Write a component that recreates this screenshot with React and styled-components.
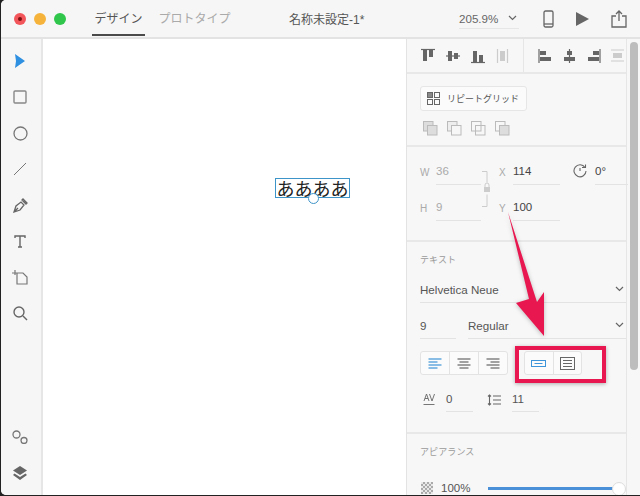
import React from "react";
import styled, { createGlobalStyle } from "styled-components";

const GlobalStyle = createGlobalStyle`
  html, body { margin: 0; padding: 0; background: #222; }
  * { box-sizing: border-box; }
  #root { font-family: "Liberation Sans", "Noto Sans CJK JP", sans-serif; }
`;

const Window = styled.div`
  position: relative;
  width: 639px;
  height: 495px;
  margin-left: 1px;
  background: #f7f7f7;
  display: flex;
  flex-direction: column;
  overflow: hidden;
  border-radius: 5px 0 0 5px;
`;

const TitleBar = styled.div`
  height: 39px;
  flex: none;
  display: flex;
  align-items: center;
  background: #f6f6f6;
  border-bottom: 2px solid #e3e3e3;
`;

const Lights = styled.div`
  display: flex;
  gap: 8px;
  padding-left: 13px;
  width: 91px;
`;

const Light = styled.span`
  width: 12px;
  height: 12px;
  border-radius: 50%;
  background: ${(p) => p.color};
  display: flex;
  align-items: center;
  justify-content: center;
  &::after {
    content: "";
    display: ${(p) => (p.$dot ? "block" : "none")};
    width: 4px;
    height: 4px;
    border-radius: 50%;
    background: #7a1010;
  }
`;

const Tabs = styled.div`
  display: flex;
  gap: 13px;
  height: 37px;
`;

const Tab = styled.div`
  height: 36px;
  width: ${(p) => p.$w}px;
  padding-top: 12px;
  text-align: center;
  font-size: 12px;
  line-height: 14px;
  color: ${(p) => (p.$active ? "#555" : "#aaa")};
  border-bottom: 2px solid ${(p) => (p.$active ? "#4a4a4a" : "transparent")};
`;

const DocTitle = styled.div`
  margin-left: 58px;
  font-size: 12px;
  color: #555;
  width: 170px;
`;

const Zoom = styled.div`
  display: flex;
  align-items: center;
  justify-content: space-between;
  width: 60px;
  height: 21px;
  padding-right: 2px;
  border-bottom: 1px solid #e6e6e6;
  font-size: 11.6px;
  color: #666;
  white-space: nowrap;
`;

const TitleIcons = styled.div`
  display: flex;
  align-items: center;
  margin-left: 24px;
  gap: 22px;
`;

const Main = styled.div`
  flex: 1;
  display: flex;
  min-height: 0;
`;

const ToolRail = styled.div`
  width: 42px;
  flex: none;
  background: #f6f6f6;
  border-right: 2px solid #e6e6e6;
  display: flex;
  flex-direction: column;
  align-items: center;
  padding: 12px 2px 12px 0;
  gap: 16px;
`;

const ToolSlot = styled.div`
  width: 20px;
  height: 20px;
  display: flex;
  align-items: center;
  justify-content: center;
`;

const Spacer = styled.div`
  flex: 1;
`;

const Canvas = styled.div`
  flex: 1;
  background: #fff;
  position: relative;
`;

const Selection = styled.div`
  position: absolute;
  left: 232px;
  top: 139px;
  width: 75px;
  height: 20px;
  border: 1px solid #3d94c8;
  font-size: 18px;
  line-height: 18px;
  color: #222;
  text-align: center;
  white-space: nowrap;
  font-family: "Noto Sans CJK JP", sans-serif;
  &::after {
    content: "";
    position: absolute;
    left: 32px;
    top: 14px;
    width: 9px;
    height: 9px;
    border-radius: 50%;
    border: 1.5px solid #3d94c8;
    background: #fff;
  }
`;

const Inspector = styled.div`
  width: 234px;
  flex: none;
  display: flex;
  border-left: 1px solid #e3e3e3;
`;

const PanelColumn = styled.div`
  width: 220px;
  flex: none;
  border-right: 1px solid #e6e6e6;
`;

const Track = styled.div`
  flex: 1;
  padding: 3px 2px 0 3px;
`;

const Thumb = styled.div`
  width: 8px;
  height: 328px;
  background: #bdbdbd;
  border-radius: 4px;
`;

const AlignBar = styled.div`
  height: 35px;
  display: flex;
  border-bottom: 2px solid #e8e8e8;
`;

const AlignGroup = styled.div`
  display: flex;
  align-items: center;
  width: ${(p) => p.$w}px;
  padding-left: 14px;
  gap: ${(p) => p.$gap}px;
  border-right: ${(p) => (p.$divider ? "1px solid #e6e6e6" : "none")};
`;

const Section = styled.div`
  height: ${(p) => p.$h}px;
  padding: ${(p) => p.$pad};
  border-bottom: ${(p) => (p.$last ? "none" : "2px solid #e8e8e8")};
`;

const RepeatButton = styled.div`
  width: 107px;
  height: 25px;
  background: #fbfbfb;
  border: 1px solid #e6e6e6;
  border-radius: 3px;
  display: flex;
  align-items: center;
  padding-left: 6px;
  gap: 7px;
  font-size: 9px;
  color: #555;
  white-space: nowrap;
`;

const BoolRow = styled.div`
  display: flex;
  gap: 9px;
  margin: 10px 0 0 3px;
`;

const GeoGrid = styled.div`
  display: grid;
  grid-template-columns: 16px 45px 18px 14px 47px 13px 22px 33px;
  grid-auto-rows: 36px;
  padding-top: 17px;
`;

const AxisLabel = styled.div`
  font-size: 10px;
  color: #aaa;
  padding-top: 3px;
`;

const Field = styled.div`
  height: 25px;
  margin-top: -4px;
  padding-top: 4px;
  font-size: 11.5px;
  line-height: 14px;
  color: ${(p) => (p.$dim ? "#aaa" : "#444")};
  border-bottom: 1px solid #e3e3e3;
`;

const LockCell = styled.div`
  grid-row: 1 / span 2;
  grid-column: 3;
  display: flex;
  align-items: flex-start;
  margin-top: 7px;
`;

const SectionLabel = styled.div`
  font-size: 9px;
  line-height: 12px;
  color: #9a9a9a;
  letter-spacing: 0.1px;
`;

const SelectRow = styled.div`
  display: flex;
  gap: 12px;
  margin-top: ${(p) => p.$mt}px;
`;

const SelectField = styled.div`
  height: 25px;
  width: ${(p) => p.$w}px;
  display: flex;
  justify-content: space-between;
  align-items: center;
  font-size: 11.6px;
  color: #555;
  border-bottom: 1px solid #e3e3e3;
  padding: 0 2px 2px 0;
`;

const ButtonsRow = styled.div`
  display: flex;
  gap: 16px;
  margin-top: 12px;
`;

const Segments = styled.div`
  display: flex;
  height: 24px;
  width: ${(p) => p.$w}px;
  background: #fbfbfb;
  border: 1px solid #e3e3e3;
  border-radius: 3px;
`;

const Segment = styled.div`
  flex: 1;
  display: flex;
  align-items: center;
  justify-content: center;
  & + & { border-left: 1px solid #e3e3e3; }
`;

const SpacingRow = styled.div`
  display: flex;
  align-items: center;
  margin-top: 12px;
`;

const SpacingIcon = styled.span`
  display: flex;
  margin-left: ${(p) => p.$ml}px;
`;

const SmallField = styled.div`
  width: 27px;
  height: 25px;
  padding-top: 5px;
  margin-left: 11px;
  font-size: 11.5px;
  line-height: 14px;
  color: #555;
  border-bottom: 1px solid #e3e3e3;
`;

const OpacityRow = styled.div`
  display: flex;
  align-items: center;
  margin-top: 24px;
  font-size: 11.5px;
  color: #555;
`;

const Checker = styled.div`
  width: 12px;
  height: 12px;
  margin: 0 8px 0 1px;
  background: repeating-conic-gradient(#aaa 0 25%, #e8e8e8 0 50%) 0 0 / 4px 4px;
`;

const Slider = styled.div`
  position: relative;
  width: 134px;
  height: 3px;
  margin-left: 18px;
  background: #4a90d9;
  &::after {
    content: "";
    position: absolute;
    right: -4px;
    top: -5px;
    width: 12px;
    height: 12px;
    border-radius: 50%;
    background: #fff;
    border: 1px solid #ddd;
  }
`;

const Callout = styled.div`
  position: absolute;
  left: 514px;
  top: 346px;
  width: 91px;
  height: 37px;
  border: 4px solid #e8174f;
  box-shadow: 0 1px 4px rgba(0, 0, 0, 0.3);
`;

const ArrowLayer = styled.svg`
  position: absolute;
  left: 500px;
  top: 205px;
  filter: drop-shadow(0 1px 2px rgba(0, 0, 0, 0.25));
`;

const Ic = ({ w = 16, h = 16, children, fill = "none", stroke = "#777", sw = 1.3 }) => (
  <svg width={w} height={h} viewBox={`0 0 ${w} ${h}`} fill={fill} stroke={stroke} strokeWidth={sw}>
    {children}
  </svg>
);

const Chevron = () => (
  <Ic w={9} h={6} stroke="#666" sw={1.2}>
    <path d="M1 1l3.500 3.500L8 1" />
  </Ic>
);

const TextLines = ({ color, align }) => {
  const rows = [13, 9, 13, 9];
  return (
    <Ic w={14} h={11} stroke={color} sw={1.2}>
      {rows.map((len, i) => {
        const x = align === "left" ? 0.5 : align === "right" ? 13.5 - len : (14 - len) / 2;
        return <path key={i} d={`M${x} ${1 + i * 3}h${len}`} />;
      })}
    </Ic>
  );
};

const BarIcon = ({ d, bars, faded }) => (
  <Ic w={15} h={16} stroke={faded ? "#ccc" : "#666"} sw={1.2}>
    <path d={d} />
    {bars.map((b, i) => (
      <rect key={i} x={b[0]} y={b[1]} width={b[2]} height={b[3]} fill={faded ? "#ccc" : "#666"} stroke="none" />
    ))}
  </Ic>
);

const BoolIcon = ({ a, b }) => (
  <Ic w={15} h={15} stroke="#bbb" sw={1}>
    <rect x="0.5" y="0.5" width="9.5" height="9.5" fill={a} />
    <rect x="4.5" y="4.5" width="9.5" height="9.5" fill={b} />
  </Ic>
);

export default function App() {
  return (
    <Window>
      <GlobalStyle />
      <TitleBar>
        <Lights>
          <Light color="#f2555a" $dot />
          <Light color="#f6b33c" />
          <Light color="#2fc64b" />
        </Lights>
        <Tabs>
          <Tab $active $w={53}>デザイン</Tab>
          <Tab $w={73}>プロトタイプ</Tab>
        </Tabs>
        <DocTitle>名称未設定-1*</DocTitle>
        <Zoom>
          <span>205.9%</span>
          <Chevron />
        </Zoom>
        <TitleIcons>
          <Ic w={11} h={18} stroke="#666" sw={1.3}>
            <rect x="1" y="1" width="9" height="16" rx="1.5" />
            <path d="M1 14h9" />
          </Ic>
          <Ic w={13} h={14} fill="#666" stroke="none">
            <path d="M0 0l13 7-13 7z" />
          </Ic>
          <Ic w={16} h={18} stroke="#666" sw={1.3}>
            <path d="M5 6H1v11h14V6h-4M8 11V1M5 4l3-3 3 3" />
          </Ic>
        </TitleIcons>
      </TitleBar>
      <Main>
        <ToolRail>
          <ToolSlot>
            <Ic w={12} h={14} fill="#2f8fe0" stroke="none">
              <path d="M1 0l10 7-10 7 1-7z" />
            </Ic>
          </ToolSlot>
          <ToolSlot>
            <Ic w={14} h={14} stroke="#888" sw={1.4}>
              <rect x="1" y="1" width="12" height="12" rx="1" />
            </Ic>
          </ToolSlot>
          <ToolSlot>
            <Ic w={15} h={15} stroke="#777">
              <circle cx="7.5" cy="7.5" r="6.5" />
            </Ic>
          </ToolSlot>
          <ToolSlot>
            <Ic w={14} h={14} stroke="#777" sw={1}>
              <path d="M1 13L13 1" />
            </Ic>
          </ToolSlot>
          <ToolSlot>
            <Ic w={15} h={15} stroke="#666">
              <path d="M1 14l2-6 5-4 3 3-4 5zM1 14l4-4M9 2l1-1 4 4-1 1z" />
            </Ic>
          </ToolSlot>
          <ToolSlot>
            <Ic w={12} h={13} stroke="#666" sw={1.4}>
              <path d="M1 3V1h10v2M6 1v11M4 12h4" />
            </Ic>
          </ToolSlot>
          <ToolSlot>
            <Ic w={16} h={16} stroke="#777" sw={1.2}>
              <path d="M0 4h5M3 1v5M5 4h6l4 4v7H5z" />
            </Ic>
          </ToolSlot>
          <ToolSlot>
            <Ic w={15} h={15} stroke="#666" sw={1.4}>
              <circle cx="6" cy="6" r="5" />
              <path d="M10 10l4 4" />
            </Ic>
          </ToolSlot>
          <Spacer />
          <ToolSlot>
            <Ic w={16} h={14} stroke="#777" sw={1.3}>
              <circle cx="4.5" cy="4.5" r="3.5" />
              <circle cx="12" cy="10.5" r="3" />
            </Ic>
          </ToolSlot>
          <ToolSlot>
            <Ic w={16} h={15} fill="#666" stroke="none">
              <path d="M8 0l7 4.5L8 9 1 4.5z" />
              <path d="M2.5 7.5L1 9l7 5 7-5-1.500-1.500L8 11z" />
            </Ic>
          </ToolSlot>
        </ToolRail>
        <Canvas>
          <Selection>ああああ</Selection>
        </Canvas>
        <Inspector>
          <PanelColumn>
            <AlignBar>
              <AlignGroup $w={117} $gap={10} $divider>
                <BarIcon d="M0 1.500h14" bars={[[2, 2, 4, 11], [8, 2, 4, 7]]} />
                <BarIcon d="M0 8h14" bars={[[2, 3, 4, 10], [8, 5, 4, 6]]} />
                <BarIcon d="M0 14.500h14" bars={[[2, 3, 4, 11], [8, 7, 4, 7]]} />
                <BarIcon d="M1.500 1v14M11.500 1v14" bars={[[4, 3, 5, 10]]} faded />
              </AlignGroup>
              <AlignGroup $w={102} $gap={9}>
                <BarIcon d="M1 1v14" bars={[[2, 3, 6, 4], [2, 9, 11, 4]]} />
                <BarIcon d="M7.500 1v14" bars={[[5, 3, 5, 4], [2, 9, 11, 4]]} />
                <BarIcon d="M14 1v14" bars={[[7, 3, 6, 4], [2, 9, 11, 4]]} />
                <BarIcon d="M1 2h13M1 13h13" bars={[[3, 5, 9, 5]]} faded />
              </AlignGroup>
            </AlignBar>
            <Section $h={73} $pad="12px 0 0 13px">
              <RepeatButton>
                <Ic w={13} h={13} stroke="#666" sw={1}>
                  <rect x="0.5" y="0.5" width="5" height="5" fill="#888" />
                  <rect x="7.500" y="0.5" width="5" height="5" />
                  <rect x="0.5" y="7.500" width="5" height="5" />
                  <rect x="7.500" y="7.500" width="5" height="5" />
                </Ic>
                リピートグリッド
              </RepeatButton>
              <BoolRow>
                <BoolIcon a="#ddd" b="#ddd" />
                <BoolIcon a="#eee" b="#f7f7f7" />
                <BoolIcon a="#f7f7f7" b="none" />
                <BoolIcon a="#f7f7f7" b="#ddd" />
              </BoolRow>
            </Section>
            <Section $h={95} $pad="0 0 0 13px">
              <GeoGrid>
                <AxisLabel>W</AxisLabel>
                <Field $dim>36</Field>
                <LockCell>
                  <Ic w={10} h={36} stroke="#ccc" sw={1}>
                    <path d="M1 0.500h5v11M1 35.500h5v-12" />
                    <rect x="3" y="16" width="6" height="5" fill="#ccc" stroke="none" />
                    <path d="M4 16v-2a2 2 0 0 1 4 0v2" />
                  </Ic>
                </LockCell>
                <AxisLabel>X</AxisLabel>
                <Field>114</Field>
                <span />
                <Ic w={14} h={14} stroke="#666" sw={1.1}>
                  <path d="M12 3.500A6 6 0 1 0 13 7M9 3.500h3.500V0.500M7 4v3" />
                </Ic>
                <Field>0°</Field>
                <AxisLabel>H</AxisLabel>
                <Field $dim>9</Field>
                <AxisLabel>Y</AxisLabel>
                <Field>100</Field>
              </GeoGrid>
            </Section>
            <Section $h={192} $pad="12px 0 0 13px">
              <SectionLabel>テキスト</SectionLabel>
              <SelectRow $mt={12}>
                <SelectField $w={206}>
                  Helvetica Neue
                  <Chevron />
                </SelectField>
              </SelectRow>
              <SelectRow $mt={11}>
                <SelectField $w={36}>9</SelectField>
                <SelectField $w={158}>
                  Regular
                  <Chevron />
                </SelectField>
              </SelectRow>
              <ButtonsRow>
                <Segments $w={88}>
                  <Segment><TextLines color="#3d94d8" align="left" /></Segment>
                  <Segment><TextLines color="#666" align="center" /></Segment>
                  <Segment><TextLines color="#666" align="right" /></Segment>
                </Segments>
                <Segments $w={58}>
                  <Segment>
                    <Ic w={15} h={7} stroke="#3d94d8" sw={1}>
                      <rect x="0.5" y="0.5" width="14" height="6" />
                      <path d="M3.500 3.500h8" />
                    </Ic>
                  </Segment>
                  <Segment>
                    <Ic w={15} h={13} stroke="#666" sw={1}>
                      <rect x="0.5" y="0.5" width="14" height="12" />
                      <path d="M3 3.500h9M3 6.500h9M3 9.500h9" />
                    </Ic>
                  </Segment>
                </Segments>
              </ButtonsRow>
              <SpacingRow>
                <SpacingIcon $ml={3}>
                  <Ic w={12} h={13} stroke="#666" sw={0.9}>
                    <path d="M1 8l2.500-7L6 8M2 5.500h3M6.500 1L9 8l2.500-7M0.500 11.500h11" />
                  </Ic>
                </SpacingIcon>
                <SmallField>0</SmallField>
                <SpacingIcon $ml={14}>
                  <Ic w={14} h={12} stroke="#666" sw={1.1}>
                    <path d="M2.500 1v10M1 2.500L2.500 1 4 2.500M1 9.500L2.500 11 4 9.500M6 2h8M6 6h8M6 10h8" />
                  </Ic>
                </SpacingIcon>
                <SmallField>11</SmallField>
              </SpacingRow>
            </Section>
            <Section $h={62} $pad="12px 0 0 13px" $last>
              <SectionLabel>アピアランス</SectionLabel>
              <OpacityRow>
                <Checker />
                100%
                <Slider />
              </OpacityRow>
            </Section>
          </PanelColumn>
          <Track>
            <Thumb />
          </Track>
        </Inspector>
      </Main>
      <ArrowLayer width="60" height="160" viewBox="0 0 60 160">
        <path d="M7 7L36 97 43 87 43 131 15 98 28 94z" fill="#e8174f" />
      </ArrowLayer>
      <Callout />
    </Window>
  );
}
